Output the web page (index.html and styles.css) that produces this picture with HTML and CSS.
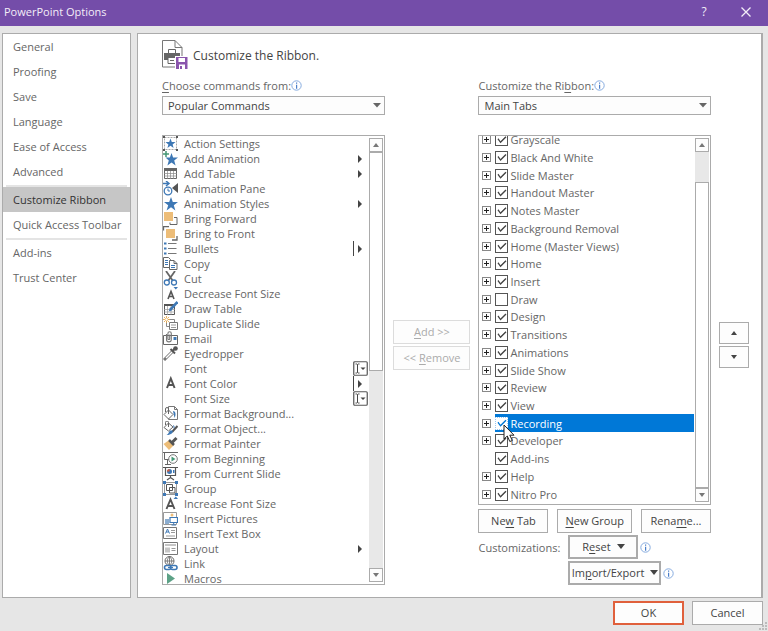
FILE: index.html
```html
<!DOCTYPE html>
<html lang="en">
<head>
<meta charset="utf-8">
<title>PowerPoint Options</title>
<link rel="stylesheet" href="styles.css">
</head>
<body>
<header class="titlebar">
  <h1>PowerPoint Options</h1>
  <button class="title-btn" type="button" aria-label="Help">?</button>
  <button class="title-btn" type="button" aria-label="Close"><svg width="10" height="10" viewBox="0 0 10 10"><path d="M0.5 0.5l9 9M9.5 0.5l-9 9" stroke="#f3eef8" stroke-width="1.3"/></svg></button>
</header>
<div class="workspace">
  <nav class="sidebar">
    <a href="#">General</a>
    <a href="#">Proofing</a>
    <a href="#">Save</a>
    <a href="#">Language</a>
    <a href="#">Ease of Access</a>
    <a href="#">Advanced</a>
    <hr>
    <a href="#" class="current" aria-current="page">Customize Ribbon</a>
    <a href="#">Quick Access Toolbar</a>
    <hr>
    <a href="#">Add-ins</a>
    <a href="#">Trust Center</a>
  </nav>
  <main class="panel">
    <div class="heading">
      <svg width="26" height="30" viewBox="0 0 26 30" fill="none">
        <path d="M.5 .5h12.500l7 7V27H.5z" fill="#fff" stroke="#777"/><path d="M13 .5V7.500h7" stroke="#777"/>
        <path d="M6.500 9.500h7v4h-7z" fill="#fff" stroke="#666"/><path d="M2 13h16v7H2z" fill="#666"/><path d="M6 17.500h8v6H6z" fill="#fff" stroke="#666"/><path d="M8 20.500h4" stroke="#666"/>
        <path d="M13 16h13v14H13z" fill="#fff"/><path d="M14 17h11.500v12H14z" fill="#8a55ad"/><path d="M16.500 18h6.500v4h-6.500z" fill="#fff"/><path d="M17 24.500h6V29h-6z" fill="#fff"/><path d="M18 26h2v3h-2z" fill="#8a55ad"/>
      </svg>
      <h2>Customize the Ribbon.</h2>
    </div>
    <div class="columns">
      <section class="col">
        <div class="field-label"><label for="source"><u>C</u>hoose commands from:</label><svg class="info"><use href="#i-info"/></svg></div>
        <div class="combo"><select id="source"><option>Popular Commands</option></select><svg width="8" height="5"><path d="M0 0h8L4 4.500z" fill="#666"/></svg></div>
        <div class="listbox">
          <ul class="commands" role="listbox" aria-label="Commands">
            <li role="option"><svg><use href="#i-action"/></svg><span>Action Settings</span></li>
            <li role="option"><svg><use href="#i-addanim"/></svg><span>Add Animation</span><i class="more"></i></li>
            <li role="option"><svg><use href="#i-table"/></svg><span>Add Table</span><i class="more"></i></li>
            <li role="option"><svg><use href="#i-pane"/></svg><span>Animation Pane</span></li>
            <li role="option"><svg><use href="#i-star"/></svg><span>Animation Styles</span><i class="more"></i></li>
            <li role="option"><svg><use href="#i-forward"/></svg><span>Bring Forward</span></li>
            <li role="option"><svg><use href="#i-front"/></svg><span>Bring to Front</span></li>
            <li role="option"><svg><use href="#i-bullets"/></svg><span>Bullets</span><i class="more split"></i></li>
            <li role="option"><svg><use href="#i-copy"/></svg><span>Copy</span></li>
            <li role="option"><svg><use href="#i-cut"/></svg><span>Cut</span></li>
            <li role="option"><svg><use href="#i-decrease"/></svg><span>Decrease Font Size</span></li>
            <li role="option"><svg><use href="#i-draw"/></svg><span>Draw Table</span></li>
            <li role="option"><svg><use href="#i-duplicate"/></svg><span>Duplicate Slide</span></li>
            <li role="option"><svg><use href="#i-email"/></svg><span>Email</span></li>
            <li role="option"><svg><use href="#i-dropper"/></svg><span>Eyedropper</span></li>
            <li role="option"><svg></svg><span>Font</span><svg class="edit"><use href="#i-edit"/></svg></li>
            <li role="option"><svg><use href="#i-color"/></svg><span>Font Color</span><i class="more split"></i></li>
            <li role="option"><svg></svg><span>Font Size</span><svg class="edit"><use href="#i-edit"/></svg></li>
            <li role="option"><svg><use href="#i-background"/></svg><span>Format Background...</span></li>
            <li role="option"><svg><use href="#i-object"/></svg><span>Format Object...</span></li>
            <li role="option"><svg><use href="#i-painter"/></svg><span>Format Painter</span></li>
            <li role="option"><svg><use href="#i-beginning"/></svg><span>From Beginning</span></li>
            <li role="option"><svg><use href="#i-current"/></svg><span>From Current Slide</span></li>
            <li role="option"><svg><use href="#i-group"/></svg><span>Group</span></li>
            <li role="option"><svg><use href="#i-increase"/></svg><span>Increase Font Size</span></li>
            <li role="option"><svg><use href="#i-pictures"/></svg><span>Insert Pictures</span></li>
            <li role="option"><svg><use href="#i-textbox"/></svg><span>Insert Text Box</span></li>
            <li role="option"><svg><use href="#i-layout"/></svg><span>Layout</span><i class="more"></i></li>
            <li role="option"><svg><use href="#i-link"/></svg><span>Link</span></li>
            <li role="option"><svg><use href="#i-macros"/></svg><span>Macros</span></li>
          </ul>
          <div class="scrollbar scroll-commands">
            <button type="button" aria-label="Scroll up"><i class="tri up"></i></button><div class="thumb"></div><div class="track"></div><button type="button" aria-label="Scroll down"><i class="tri down"></i></button>
          </div>
        </div>
      </section>
      <div class="transfer">
        <button type="button" disabled><span><u>A</u>dd &gt;&gt;</span></button>
        <button type="button" disabled><span>&lt;&lt; <u>R</u>emove</span></button>
      </div>
      <section class="col">
        <div class="field-label"><label for="target">Customize the Ri<u>b</u>bon:</label><svg class="info"><use href="#i-info"/></svg></div>
        <div class="combo"><select id="target"><option>Main Tabs</option></select><svg width="8" height="5"><path d="M0 0h8L4 4.500z" fill="#666"/></svg></div>
        <div class="listbox">
          <div class="viewport">
          <ul class="tree">
            <li><button type="button" class="expand" aria-label="Expand"></button><label><input type="checkbox" checked><span>Grayscale</span></label></li>
            <li><button type="button" class="expand" aria-label="Expand"></button><label><input type="checkbox" checked><span>Black And White</span></label></li>
            <li><button type="button" class="expand" aria-label="Expand"></button><label><input type="checkbox" checked><span>Slide Master</span></label></li>
            <li><button type="button" class="expand" aria-label="Expand"></button><label><input type="checkbox" checked><span>Handout Master</span></label></li>
            <li><button type="button" class="expand" aria-label="Expand"></button><label><input type="checkbox" checked><span>Notes Master</span></label></li>
            <li><button type="button" class="expand" aria-label="Expand"></button><label><input type="checkbox" checked><span>Background Removal</span></label></li>
            <li><button type="button" class="expand" aria-label="Expand"></button><label><input type="checkbox" checked><span>Home (Master Views)</span></label></li>
            <li><button type="button" class="expand" aria-label="Expand"></button><label><input type="checkbox" checked><span>Home</span></label></li>
            <li><button type="button" class="expand" aria-label="Expand"></button><label><input type="checkbox" checked><span>Insert</span></label></li>
            <li><button type="button" class="expand" aria-label="Expand"></button><label><input type="checkbox"><span>Draw</span></label></li>
            <li><button type="button" class="expand" aria-label="Expand"></button><label><input type="checkbox" checked><span>Design</span></label></li>
            <li><button type="button" class="expand" aria-label="Expand"></button><label><input type="checkbox" checked><span>Transitions</span></label></li>
            <li><button type="button" class="expand" aria-label="Expand"></button><label><input type="checkbox" checked><span>Animations</span></label></li>
            <li><button type="button" class="expand" aria-label="Expand"></button><label><input type="checkbox" checked><span>Slide Show</span></label></li>
            <li><button type="button" class="expand" aria-label="Expand"></button><label><input type="checkbox" checked><span>Review</span></label></li>
            <li><button type="button" class="expand" aria-label="Expand"></button><label><input type="checkbox" checked><span>View</span></label></li>
            <li class="selected"><button type="button" class="expand" aria-label="Expand"></button><label><input type="checkbox" checked><span>Recording</span></label><svg class="pointer" width="13" height="19" viewBox="0 0 13 19"><path d="M1 1v14l3.300-3 2.500 5.500 2.500-1-2.500-5.300H11z" fill="#fff" stroke="#222"/></svg></li>
            <li><button type="button" class="expand" aria-label="Expand"></button><label><input type="checkbox" checked><span>Developer</span></label></li>
            <li class="leaf"><label><input type="checkbox" checked><span>Add-ins</span></label></li>
            <li><button type="button" class="expand" aria-label="Expand"></button><label><input type="checkbox" checked><span>Help</span></label></li>
            <li><button type="button" class="expand" aria-label="Expand"></button><label><input type="checkbox" checked><span>Nitro Pro</span></label></li>
          </ul>
          </div>
          <div class="scrollbar scroll-tabs">
            <button type="button" aria-label="Scroll up"><i class="tri up"></i></button><div class="track"></div><div class="thumb"></div><button type="button" aria-label="Scroll down"><i class="tri down"></i></button>
          </div>
        </div>
        <div class="tab-actions">
          <button type="button"><span>Ne<u>w</u> Tab</span></button>
          <button type="button"><span><u>N</u>ew Group</span></button>
          <button type="button"><span>Rena<u>m</u>e...</span></button>
        </div>
        <div class="customizations">
          <span class="caption">Customizations:</span>
          <button type="button" class="menu-btn reset"><span>R<u>e</u>set</span><i class="tri down dark"></i></button><svg class="info"><use href="#i-info"/></svg>
          <button type="button" class="menu-btn import"><span>Im<u>p</u>ort/Export</span><i class="tri down dark"></i></button><svg class="info"><use href="#i-info"/></svg>
        </div>
      </section>
      <div class="reorder">
        <button type="button" aria-label="Move up"><i class="tri up dark"></i></button>
        <button type="button" aria-label="Move down"><i class="tri down dark"></i></button>
      </div>
    </div>
  </main>
</div>
<footer class="footer">
  <button type="button" class="ok">OK</button>
  <button type="button">Cancel</button>
  <svg class="grip" width="8" height="8"><path d="M6 0h2v2H6zM3 3h2v2H3zM6 3h2v2H6zM0 6h2v2H0zM3 6h2v2H3zM6 6h2v2H6z" fill="#bbb"/></svg>
</footer>

<svg class="defs" aria-hidden="true">
  <symbol id="i-info" viewBox="0 0 11 11"><circle cx="5.500" cy="5.500" r="4.700" fill="#fff" stroke="#86abdf"/><path d="M5 2.500h1.200v1.300H5zM5 4.700h1.200v4H5z" fill="#4b7fc9"/></symbol>
  <symbol id="i-action" viewBox="0 0 15 15"><path d="M1.500 1.500h12v12h-12z" fill="none" stroke="#aaa" stroke-dasharray="2 1"/><path d="M0 0h2v2H0zM13 0h2v2h-2zM0 13h2v2H0zM13 13h2v2h-2z" fill="#555"/><path d="M7.500 2.500l1.300 3.600h3.700l-2.900 2.300 1 3.600-3.100-2.200L4.400 12l1-3.600-2.900-2.300h3.700z" fill="#3e78b5"/></symbol>
  <symbol id="i-addanim" viewBox="0 0 15 15"><path d="M8.500 2l1.600 4.500H15l-3.800 3 1.400 5-4.100-3-4.100 3 1.400-5L2.500 6.500h4.400z" fill="#3e78b5"/><path d="M3 0v6M0 3h6" stroke="#fff" stroke-width="3"/><path d="M3 0v6M0 3h6" stroke="#459776" stroke-width="1.500"/></symbol>
  <symbol id="i-table" viewBox="0 0 15 15"><path d="M1.500 2.500h12v10h-12z" fill="#fff" stroke="#666"/><path d="M1 2h13v3H1z" fill="#666"/><path d="M4.500 5v8M7.500 5v8M10.500 5v8M1 7.500h13M1 10h13" stroke="#888" stroke-width=".7"/></symbol>
  <symbol id="i-pane" viewBox="0 0 15 15"><path d="M0 2.500h5M3 0l3 2.500L3 5" stroke="#3e78b5" stroke-width="1.500" fill="none"/><circle cx="5" cy="10" r="3.800" fill="#fff" stroke="#3e78b5" stroke-width="1.300"/><path d="M5 7.500V10h2" stroke="#3e78b5" fill="none"/><path d="M15 2v10L9 7z" fill="#555"/></symbol>
  <symbol id="i-star" viewBox="0 0 15 15"><path d="M8 1l1.800 5H15l-4.200 3.200 1.600 5.300L8 11.300l-4.400 3.200 1.600-5.300L1 6h5.200z" fill="#3e78b5"/></symbol>
  <symbol id="i-forward" viewBox="0 0 15 15"><path d="M1 1h9v9H1z" fill="#edbd78"/><path d="M11 6.500h3v7H7v-2" fill="none" stroke="#666"/></symbol>
  <symbol id="i-front" viewBox="0 0 15 15"><path d="M.5 4.500V.5H6M14 10v4H9" fill="none" stroke="#666" stroke-width="1.300"/><path d="M3 3h9v9H3z" fill="#edbd78"/></symbol>
  <symbol id="i-bullets" viewBox="0 0 15 15"><path d="M1 1.500h2.500v2H1zM1 6.500h2.500v2H1zM1 11.500h2.500v2H1z" fill="#3e78b5"/><path d="M5 2.500h8.500M5 7.500h8.500M5 12.500h8.500" stroke="#777"/></symbol>
  <symbol id="i-copy" viewBox="0 0 15 15"><path d="M.5 1.500h5l2 2v8h-7z" fill="#fff" stroke="#666"/><path d="M2 4.500h3M2 6.500h3M2 8.500h3" stroke="#3e78b5"/><path d="M6.500 4.500h4.500l3 3v6H6.500z" fill="#fff" stroke="#666"/><path d="M11 4.500v3h3" fill="none" stroke="#666"/><path d="M8 9.500h4M8 11.500h4" stroke="#3e78b5"/></symbol>
  <symbol id="i-cut" viewBox="0 0 15 15"><path d="M3 0l7 10M12 0L5 10" stroke="#666" stroke-width="1.800"/><circle cx="3.800" cy="11.500" r="2.500" fill="#fff" stroke="#3e78b5" stroke-width="1.300"/><circle cx="11" cy="11.500" r="2.500" fill="#fff" stroke="#3e78b5" stroke-width="1.300"/></symbol>
  <symbol id="i-decrease" viewBox="0 0 15 15"><path d="M5 13L8 5.500 11 13M6 10.500h4" fill="none" stroke="#555" stroke-width="1.600"/><path d="M10.500 1h4.500l-2.200 2.500z" fill="#3e78b5"/></symbol>
  <symbol id="i-draw" viewBox="0 0 15 15"><path d="M1.500 3.500h10v10h-10z" fill="#fff" stroke="#555"/><path d="M1 3h9v2H1z" fill="#555"/><path d="M4.500 5v9M8 5v9M1 8.500h11M1 11h11" stroke="#999" stroke-width=".7"/><path d="M14.500 1L7 9" stroke="#3e78b5" stroke-width="2.600"/><path d="M7 7.500L5.500 10.500l3-1z" fill="#3e78b5"/></symbol>
  <symbol id="i-duplicate" viewBox="0 0 15 15"><path d="M3.500 3.500h8v7h-8z" fill="#fff" stroke="#888"/><path d="M6.500 6.500h8v7h-8z" fill="#fff" stroke="#777"/><path d="M8 9h5M8 11.500h5" stroke="#999"/><path d="M3.500 0v7M0 3.500h7M1 1l5 5M6 1L1 6" stroke="#e7a94e" stroke-width=".9"/><circle cx="3.500" cy="3.500" r="1.200" fill="#fff"/></symbol>
  <symbol id="i-email" viewBox="0 0 15 15"><path d="M.5 4.500h14v9H.5z" fill="#fff" stroke="#666"/><path d="M10.500 6h3v3h-3z" fill="#3e78b5"/><path d="M3.500 3v5.500a2.400 2.400 0 0 0 4.800 0V2.500a1.700 1.700 0 0 0-3.400 0V8a1 1 0 0 0 1.800 0V3.500" fill="none" stroke="#777" stroke-width="1.100"/></symbol>
  <symbol id="i-dropper" viewBox="0 0 15 15"><path d="M10 5L2.500 12.500 1 14" fill="none" stroke="#777" stroke-width="3"/><path d="M9.500 5.500L3 12" stroke="#fff" stroke-width="1.400"/><path d="M7.500 3l4.500 4.500M9.500 5L13 1.500" stroke="#555" stroke-width="2"/><circle cx="12.500" cy="2.500" r="2.300" fill="#555"/></symbol>
  <symbol id="i-color" viewBox="0 0 15 15"><path d="M4 12L7.800 2.500 11.600 12M5.200 9h5.200" fill="none" stroke="#555" stroke-width="2"/></symbol>
  <symbol id="i-edit" viewBox="0 0 15 15"><rect x=".75" y=".75" width="13.500" height="13.500" rx="1" fill="#fff" stroke="#555" stroke-width="1.200"/><path d="M2.500 3h1.300l.7.500.7-.5h1.300M4.500 3.500v8M2.500 12h1.300l.7-.5.7.5h1.300" stroke="#444" fill="none"/><path d="M7.500 6.500h5L10 9z" fill="#444"/></symbol>
  <symbol id="i-background" viewBox="0 0 15 15"><path d="M5.500.5h6l3 3v10h-9z" fill="#fff" stroke="#777"/><path d="M11.500.5v3h3" fill="none" stroke="#777"/><path d="M10 5c3 0 3 4 1.500 7z" fill="#3e78b5"/><path d="M5.500 4L10 8.500 5.500 13 1 8.500z" fill="#fff" stroke="#666"/><path d="M5.500 8V3a1.500 1.500 0 0 0-3 0v3" fill="none" stroke="#666"/></symbol>
  <symbol id="i-object" viewBox="0 0 15 15"><path d="M5.500 2L10 6 5.500 10 1 6.500z" fill="#fff" stroke="#666"/><path d="M5.500 6V1.500a1.500 1.500 0 0 0-3 0V4" fill="none" stroke="#666"/><path d="M10 4c2 .5 2 3 1 4.500z" fill="#3e78b5"/><path d="M14.500 5L9 11" stroke="#555" stroke-width="2"/><path d="M9.500 9.500c1 2-1 4.500-6 4.500 2-.5 2-3 3.500-4.500z" fill="#3e78b5"/></symbol>
  <symbol id="i-painter" viewBox="0 0 15 15"><path d="M5.500 4.500l5 5L6 14 .5 8z" fill="#edbd78"/><path d="M6 4l5 5" stroke="#555" stroke-width="2.500"/><path d="M9 6.500l4.500-4.500" stroke="#555" stroke-width="3"/></symbol>
  <symbol id="i-beginning" viewBox="0 0 15 15"><path d="M0 1.500h15M1.500 2v6.500h5M4.500 8.500v5M2 13.500h6" fill="none" stroke="#666"/><circle cx="10" cy="8" r="4.300" fill="#fff" stroke="#777"/><path d="M8.500 5.500L12.500 8l-4 2.500z" fill="#459776"/></symbol>
  <symbol id="i-current" viewBox="0 0 15 15"><path d="M0 1.500h15M2.500 2v7.500h10V2M7.500 9.500v3M4 14l3.500-2.500L11 14" fill="none" stroke="#555" stroke-width="1.200"/><circle cx="6.500" cy="5.500" r="2.500" fill="#3e78b5"/><path d="M6.500 5.500V3A2.500 2.500 0 0 0 4 5.500z" fill="#d95b35"/><path d="M10 4h1.500v3H10z" fill="#3e78b5"/></symbol>
  <symbol id="i-group" viewBox="0 0 15 15"><path d="M1.500 1.500h12v12h-12z" fill="none" stroke="#999"/><path d="M3.500 3.500h6v6h-6zM6.500 6.500h5.500v5.500H6.500z" fill="none" stroke="#555"/><path d="M0 0h3v3H0zM12 0h3v3h-3zM0 12h3v3H0zM12 12h3v3h-3z" fill="#3e78b5"/></symbol>
  <symbol id="i-increase" viewBox="0 0 15 15"><path d="M3.500 13L7.500 3.500 11.500 13M5 10h5" fill="none" stroke="#555" stroke-width="1.900"/><path d="M10.500 3h4.500l-2.200-2.500z" fill="#3e78b5"/></symbol>
  <symbol id="i-pictures" viewBox="0 0 15 15"><path d="M.5 1.500h13v12H.5z" fill="#fff" stroke="#999"/><circle cx="9" cy="4" r="1.500" fill="#edbd78"/><path d="M2 8h4v5H2z" fill="#8badd0"/><path d="M7 6.500h7.500v5H7z" fill="#fff" stroke="#3e78b5" stroke-width="1.200"/><path d="M10.700 11.500v2M8.500 14h4.500" stroke="#3e78b5"/></symbol>
  <symbol id="i-textbox" viewBox="0 0 15 15"><path d="M.5 1.500h13v11H.5z" fill="#fff" stroke="#777"/><path d="M2.500 7.500L4.500 3 6.500 7.500M3.200 6h2.600" fill="none" stroke="#3e78b5"/><path d="M8 4.500h4M8 6.500h4M3 10h9" stroke="#999"/></symbol>
  <symbol id="i-layout" viewBox="0 0 15 15"><path d="M.5 1.500h14v12H.5z" fill="#fff" stroke="#777"/><path d="M2 3h11v2H2zM2 6.500h5v5H2z" fill="#c5c5c5"/><path d="M8.500 7.500h4M8.500 9.500h4" stroke="#999"/></symbol>
  <symbol id="i-link" viewBox="0 0 15 15"><circle cx="6.500" cy="5" r="4.500" fill="#fff" stroke="#666"/><path d="M2 5h9M6.500.5v9M6.500.5c-3 3-3 6 0 9M6.500.5c3 3 3 6 0 9" fill="none" stroke="#666" stroke-width=".8"/><rect x="1.500" y="9.500" width="6.500" height="4" rx="2" fill="#fff" stroke="#3e78b5" stroke-width="1.600"/><rect x="7.500" y="9.500" width="6.500" height="4" rx="2" fill="#fff" stroke="#3e78b5" stroke-width="1.600"/><path d="M5 11.500h5" stroke="#3e78b5" stroke-width="1.300"/></symbol>
  <symbol id="i-macros" viewBox="0 0 15 15"><path d="M4 2l8 5.500L4 13z" fill="#5da287"/></symbol>
</svg>
</body>
</html>
```
FILE: styles.css
```css
* { box-sizing: border-box; }

body {
  margin: 0;
  min-height: 100vh;
  display: flex;
  flex-direction: column;
  background: #e6e6e6;
  color: #666;
  font: 11px/15px "Open Sans", "Noto Sans", sans-serif;
}

button, select { font: inherit; color: #444; }
ul { list-style: none; margin: 0; padding: 0; }
u { text-underline-offset: 2px; }

button {
  display: flex;
  align-items: center;
  justify-content: center;
  padding: 0 0 1px;
  border: 1px solid #ababab;
  background: #fdfdfd;
  white-space: nowrap;
}

.defs { position: absolute; width: 0; height: 0; }

.titlebar {
  display: flex;
  align-items: center;
  height: 26px;
  padding: 0 1px 3px 4px;
  background: #744da9;
  color: #f3eef8;
}
.titlebar h1 { flex: 1; margin: 0; font-size: 11px; font-weight: 400; }
.title-btn { width: 42px; height: 23px; padding: 0; border: 0; background: none; color: #f3eef8; font-size: 12px; }

.workspace {
  flex: 1;
  display: flex;
  gap: 6px;
  padding: 7px 5px 0 2px;
}

.sidebar {
  width: 129px;
  border: 1px solid #ababab;
  background: #fff;
}
.sidebar a {
  display: block;
  padding: 5px 0 5px 10px;
  color: #666;
  text-decoration: none;
  white-space: nowrap;
}
.sidebar hr { margin: 1px 3px 0; border: 0; border-top: 2px solid #e4e4e4; }
.sidebar .current { background: #c6c6c6; color: #333; }

.panel {
  flex: 1;
  display: flex;
  flex-direction: column;
  padding: 6px 12px 12px 24px;
  border: 1px solid #ababab;
  border-right-width: 2px;
  background: #fff;
}
.heading { display: flex; align-items: center; gap: 5px; height: 30px; }
.heading h2 { margin: 0; font-size: 12px; font-weight: 400; color: #444; }

.columns {
  flex: 1;
  display: grid;
  grid-template-columns: 223fr 77px 232fr 30px;
  gap: 8px;
  padding-top: 7px;
}
.col { display: flex; flex-direction: column; min-width: 0; }
.field-label { display: flex; align-items: center; height: 17px; margin-bottom: 2px; }
.info { width: 11px; height: 11px; }

.combo { position: relative; height: 19px; }
.combo select {
  width: 100%;
  height: 19px;
  padding: 0 20px 1px 5px;
  appearance: none;
  border: 1px solid #ababab;
  border-radius: 0;
  background: #fdfdfd;
}
.combo svg { position: absolute; right: 4px; top: 7px; pointer-events: none; }

.listbox {
  flex: 1 1 0;
  min-height: 0;
  display: flex;
  margin-top: 20px;
  border: 1px solid #ababab;
  overflow: hidden;
}
.commands { flex: 1; }
.commands li { display: flex; align-items: center; height: 15px; }
.commands li svg { flex: none; width: 15px; height: 15px; }
.commands span { flex: 1; padding-left: 6px; white-space: nowrap; }
.more { display: flex; align-items: center; width: 15px; height: 15px; padding-left: 5px; }
.more::before { content: ""; border: 4px solid transparent; border-left-color: #444; border-right: 0; }
.more.split { border-left: 1px solid #444; padding-left: 4px; }

.scrollbar { display: flex; flex-direction: column; width: 14px; margin: 2px 1px; }
.scrollbar button { height: 14px; padding: 0; }
.track { background: #e8e8e8; }
.thumb { border: 1px solid #ababab; background: #fff; }
.scroll-commands .thumb { flex: 219; }
.scroll-commands .track { flex: 198; }
.scroll-tabs .track { flex: 30; }
.scroll-tabs .thumb { flex: 308; }

.tri { border: 3px solid transparent; }
.tri.up { border-bottom: 4px solid #777; border-top: 0; }
.tri.down { border-top: 4px solid #777; border-bottom: 0; }
.tri.dark.up { border-bottom-color: #444; }
.tri.dark.down { border-top-color: #444; }

.transfer, .reorder {
  align-self: center;
  display: grid;
  gap: 2px;
  padding-top: 28px;
}
.transfer button { height: 24px; border-color: #dcdcdc; color: #ababab; }
.reorder button { height: 22px; }

.viewport { flex: 1; display: flex; align-items: flex-end; overflow: hidden; padding-bottom: 1px; }
.tree { flex: 1; display: grid; grid-auto-rows: 1fr; height: calc(100% + 5px); }
.tree li { position: relative; display: flex; align-items: center; min-height: 0; padding-left: 3px; }
.tree label { flex: 1; display: flex; align-items: center; height: 100%; margin-left: 4px; }
.tree .leaf label { margin-left: 13px; }
.tree span { padding-left: 2px; }
.selected label { background: #0078d7; color: #fff; }
.expand { position: relative; width: 9px; height: 9px; padding: 0; border-color: #888; }
.expand::before, .expand::after { content: ""; position: absolute; background: #222; }
.expand::before { left: 1px; top: 3px; width: 5px; height: 1px; }
.expand::after { left: 3px; top: 1px; width: 1px; height: 5px; }
.tree input {
  flex: none;
  width: 13px;
  height: 13px;
  margin: 0;
  appearance: none;
  border: 1px solid #555;
  background: #fff;
}
.tree input:checked::before {
  content: "";
  display: block;
  width: 11px;
  height: 11px;
  background: #444;
  clip-path: polygon(1px 5px, 2px 4px, 4px 7px, 9px 2px, 10px 3px, 4px 9px);
}
.tree .selected input { border: 1px dotted #9cc8ef; }
.tree .selected input:checked::before { background: #0078d7; }
.tree .pointer { position: absolute; left: 24px; top: 10px; z-index: 1; }

.tab-actions { display: flex; justify-content: space-between; margin-top: 4px; }
.tab-actions button { width: 70px; height: 24px; }
.tab-actions button:nth-child(2) { width: 75px; }

.customizations {
  display: grid;
  grid-template-columns: 90px auto auto 1fr;
  align-items: center;
  row-gap: 2px;
  margin-top: 2px;
}
.menu-btn { gap: 6px; height: 24px; border: 2px solid #ababab; }
.menu-btn .tri { border-width: 5px 4px 0; }
.customizations .info { margin-left: 2px; }
.reset { width: 70px; }
.import { grid-column: 2 / 4; grid-row: 2; width: 93px; }
.reset + .info { grid-column: 3 / 5; }
.import + .info { grid-column: 4; grid-row: 2; }

.footer {
  position: relative;
  display: flex;
  justify-content: flex-end;
  gap: 8px;
  height: 33px;
  padding: 3px 5px 6px;
}
.footer button { width: 71px; padding-bottom: 2px; }
.footer .ok { border: 2px solid #e0603c; }
.grip { position: absolute; right: 1px; bottom: 1px; }
```
